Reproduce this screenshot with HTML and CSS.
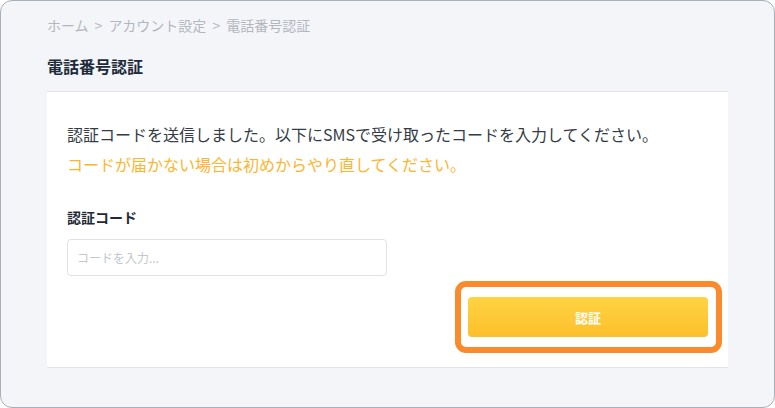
FILE: index.html
```html
<!DOCTYPE html>
<html lang="ja">
<head>
<meta charset="utf-8">
<title>電話番号認証</title>
<link rel="stylesheet" href="styles.css">
</head>
<body>
<div class="frame">
  <nav class="breadcrumb">ホーム<span class="sep">&gt;</span>アカウント設定<span class="sep">&gt;</span>電話番号認証</nav>
  <h1 class="title">電話番号認証</h1>
  <section class="card">
    <div class="message">
      <p class="msg">認証コードを送信しました。以下にSMSで受け取ったコードを入力してください。</p>
      <p class="msg warn">コードが届かない場合は初めからやり直してください。</p>
    </div>
    <div class="field">
      <label class="label" for="code">認証コード</label>
      <input id="code" class="input" type="text" placeholder="コードを入力...">
    </div>
    <div class="actions">
      <div class="btn-wrap">
        <button class="btn" type="button">認証</button>
      </div>
    </div>
  </section>
</div>
</body>
</html>
```
FILE: styles.css
```css
* { box-sizing: border-box; }
html, body { margin: 0; padding: 0; }
body {
  font-family: "Noto Sans CJK JP", "Noto Sans", sans-serif;
  width: 775px;
  height: 408px;
  overflow: hidden;
}
.frame {
  width: 775px;
  height: 408px;
  background: #f3f5f9;
  border: 1px solid #a9afb6;
  border-radius: 12px;
  padding: 14px 46px 0 46px;
}
.breadcrumb {
  font-size: 14px;
  line-height: 21px;
  color: #b3b7bd;
}
.sep { margin: 0 6px; }
.title {
  margin: 18px 0 0;
  font-size: 16px;
  line-height: 24px;
  font-weight: 700;
  color: #1d2b3b;
}
.card {
  margin-top: 13px;
  background: #fff;
  border-top: 1px solid #e2e4e8;
  border-bottom: 1px solid #e2e4e8;
  padding: 27px 20px 30px;
}
.msg {
  margin: 0;
  font-size: 16px;
  line-height: 30px;
  color: #333b45;
}
.msg.warn { color: #fdb52f; }
.field {
  margin-top: 28px;
  display: flex;
  flex-direction: column;
  align-items: flex-start;
}
.label {
  font-size: 14px;
  line-height: 21px;
  font-weight: 700;
  color: #1f2a36;
  margin-bottom: 11px;
}
.input {
  width: 320px;
  height: 37px;
  border: 1px solid #e0e2e6;
  border-radius: 4px;
  padding: 0 9px;
  font-family: inherit;
  font-size: 12px;
  color: #333;
  outline: none;
}
.input::placeholder { color: #c3c7cd; }
.actions {
  margin-top: 21px;
  display: flex;
  justify-content: flex-end;
}
.btn-wrap { position: relative; }
.btn-wrap::after {
  content: "";
  position: absolute;
  left: -13px;
  right: -14px;
  top: -16px;
  bottom: -16px;
  border: 6px solid #fb8a2c;
  border-radius: 11px;
  pointer-events: none;
}
.btn {
  display: block;
  width: 240px;
  height: 40px;
  border: none;
  border-radius: 4px;
  background: linear-gradient(180deg, #ffd342 0%, #fdbf2c 100%);
  color: #fff;
  font-family: inherit;
  font-size: 13px;
  font-weight: 700;
  cursor: pointer;
}
```
